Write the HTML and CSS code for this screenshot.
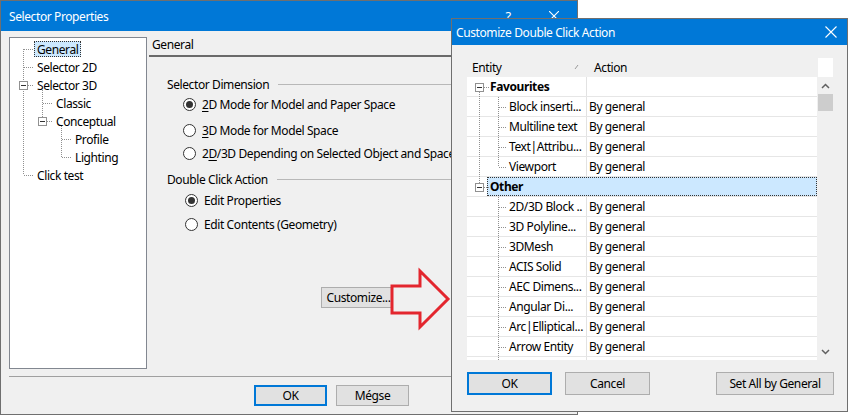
FILE: index.html
```html
<!DOCTYPE html>
<html>
<head>
<meta charset="utf-8">
<link rel="stylesheet" href="styles.css">
</head>
<body>
<div class="win main">
  <div class="titlebar main-title">
    <span class="title">Selector Properties</span>
    <span class="capbtn">?</span>
    <span class="capbtn"><svg width="10" height="10" viewBox="0 0 10 10"><path d="M0 0L10 10M10 0L0 10" stroke="#fff" stroke-width="1.1"/></svg></span>
  </div>
  <div class="main-body">
    <div class="tree">
      <svg class="tree-lines" width="136" height="160" viewBox="0 0 136 160">
        <g stroke="#909090" stroke-width="1" stroke-dasharray="1 1" fill="none">
          <path d="M13.5 11V137"/>
          <path d="M14 11.5H23M14 29.5H23M18 47.5H23M14 137.5H23"/>
          <path d="M32.5 52V79M33 65.5H42M37 83.5H42"/>
          <path d="M51.5 88V119M52 101.5H61M52 119.5H61"/>
        </g>
        <g stroke="#919191" fill="#fff">
          <rect x="9.5" y="43.5" width="8" height="8"/>
          <rect x="28.5" y="79.5" width="8" height="8"/>
        </g>
        <g stroke="#333">
          <path d="M11 47.5H16M30 83.5H35"/>
        </g>
      </svg>
      <div class="node l0"><span class="lbl sel">General</span></div>
      <div class="node l0"><span class="lbl">Selector 2D</span></div>
      <div class="node l0"><span class="lbl">Selector 3D</span></div>
      <div class="node l1"><span class="lbl">Classic</span></div>
      <div class="node l1"><span class="lbl">Conceptual</span></div>
      <div class="node l2"><span class="lbl">Profile</span></div>
      <div class="node l2"><span class="lbl">Lighting</span></div>
      <div class="node l0"><span class="lbl">Click test</span></div>
    </div>
    <div class="page">
      <div class="page-head">General</div>
      <div class="group-label g1"><span>Selector Dimension</span><i class="rule"></i></div>
      <div class="radio r1 checked"><span class="dot"></span><span><u>2</u>D Mode for Model and Paper Space</span></div>
      <div class="radio r2"><span class="dot"></span><span><u>3</u>D Mode for Model Space</span></div>
      <div class="radio r3"><span class="dot"></span><span>2<u>D</u>/3D Depending on Selected Object and Space</span></div>
      <div class="group-label g2"><span>Double Click Action</span><i class="rule"></i></div>
      <div class="radio r4 in2 checked"><span class="dot"></span><span>Edit Properties</span></div>
      <div class="radio r5 in2"><span class="dot"></span><span>Edit Contents (Geometry)</span></div>
      <div class="btn customize">Customize...</div>
    </div>
  </div>
  <div class="main-foot">
    <div class="btn default okm">OK</div>
    <div class="btn cancelm">Mégse</div>
  </div>
</div>

<svg class="arrow" width="66" height="66" viewBox="388 266 66 66">
  <path d="M392 286H420V271L448 299L420 327V313H392Z" fill="#f0f0f0" stroke="#e3262e" stroke-width="3" stroke-linejoin="miter"/>
</svg>

<div class="win dlg">
  <div class="titlebar dlg-title">
    <span class="title">Customize Double Click Action</span>
    <span class="capbtn small"><svg width="12" height="12" viewBox="0 0 12 12"><path d="M0.5 0.5L11.5 11.5M11.5 0.5L0.5 11.5" stroke="#fff" stroke-width="1.1"/></svg></span>
  </div>
  <div class="dlg-body">
    <div class="grid">
      <div class="table">
        <div class="thead">
          <div class="hc c1">Entity<svg class="sort" width="6" height="6" viewBox="0 0 6 6"><path d="M1 5L4 1" stroke="#9a9a9a" stroke-width="1"/></svg></div>
          <div class="hc c2">Action</div>
        </div>
        <div class="tbody">
          <svg class="grid-lines" width="40" height="290" viewBox="0 0 40 290">
            <g stroke="#909090" stroke-width="1" stroke-dasharray="1 1" fill="none">
              <path d="M12.5 15V106"/>
              <path d="M17 10.5H22M17 110.5H22"/>
              <path d="M31.5 20V90M32 30.5H40M32 50.5H40M32 70.5H40M32 90.5H40"/>
              <path d="M31.5 120V290M32 130.5H40M32 150.5H40M32 170.5H40M32 190.5H40M32 210.5H40M32 230.5H40M32 250.5H40M32 270.5H40M32 290.5H40"/>
            </g>
            <g stroke="#919191" fill="#fff">
              <rect x="8.5" y="6.5" width="8" height="8"/>
              <rect x="8.5" y="106.5" width="8" height="8"/>
            </g>
            <g stroke="#333">
              <path d="M10 10.5H15M10 110.5H15"/>
            </g>
          </svg>
          <div class="row grp"><div class="c1 t0"><b>Favourites</b></div><div class="c2"></div></div>
          <div class="row"><div class="c1 t1">Block inserti...</div><div class="c2">By general</div></div>
          <div class="row"><div class="c1 t1">Multiline text</div><div class="c2">By general</div></div>
          <div class="row"><div class="c1 t1">Text|Attribu...</div><div class="c2">By general</div></div>
          <div class="row"><div class="c1 t1">Viewport</div><div class="c2">By general</div></div>
          <div class="row selrow"><div class="pad"></div><div class="selbox"><b>Other</b></div></div>
          <div class="row"><div class="c1 t1">2D/3D Block ..</div><div class="c2">By general</div></div>
          <div class="row"><div class="c1 t1">3D Polyline...</div><div class="c2">By general</div></div>
          <div class="row"><div class="c1 t1">3DMesh</div><div class="c2">By general</div></div>
          <div class="row"><div class="c1 t1">ACIS Solid</div><div class="c2">By general</div></div>
          <div class="row"><div class="c1 t1">AEC Dimens...</div><div class="c2">By general</div></div>
          <div class="row"><div class="c1 t1">Angular Di...</div><div class="c2">By general</div></div>
          <div class="row"><div class="c1 t1">Arc|Elliptical...</div><div class="c2">By general</div></div>
          <div class="row"><div class="c1 t1">Arrow Entity</div><div class="c2">By general</div></div>
          <div class="row"><div class="c1 t1"></div><div class="c2"></div></div>
        </div>
      </div>
      <div class="vscroll">
        <div class="corner"></div>
        <div class="track">
          <svg class="chev" width="9" height="6" viewBox="0 0 9 6"><path d="M1 5L4.5 1.5L8 5" stroke="#606060" stroke-width="1.5" fill="none"/></svg>
          <div class="thumb"></div>
          <div class="spacer"></div>
          <svg class="chev" width="9" height="6" viewBox="0 0 9 6"><path d="M1 1L4.5 4.5L8 1" stroke="#606060" stroke-width="1.5" fill="none"/></svg>
        </div>
      </div>
    </div>
    <div class="dlg-foot">
      <div class="btn default dbtn">OK</div>
      <div class="btn dbtn">Cancel</div>
      <div class="btn setall">Set All by General</div>
    </div>
  </div>
</div>
</body>
</html>
```

FILE: styles.css
```css
* { box-sizing: border-box; }
html, body { margin: 0; padding: 0; }
body {
  width: 848px; height: 416px; overflow: hidden; position: relative;
  background: #fff;
  font-family: "Noto Sans", "DejaVu Sans", sans-serif;
  font-size: 12px; color: #000;
  letter-spacing: -0.4px;
}
u { text-decoration: underline; text-underline-offset: 2px; }

.win {
  position: absolute;
  background: #f0f0f0;
  border: 1px solid #6f6f6f;
  display: flex; flex-direction: column;
}
.main { left: 0; top: 0; width: 578px; height: 415px; }
.dlg { left: 451px; top: 18px; width: 397px; height: 394px; }

.titlebar {
  background: #0078d7; color: #fff;
  display: flex; align-items: center; flex: none;
}
.title { flex: 1; white-space: nowrap; }
.main-title { height: 30px; padding-left: 8px; }
.dlg-title { height: 26px; padding-left: 4px; }
.capbtn {
  width: 46px; height: 100%;
  display: flex; align-items: center; justify-content: center;
  font-size: 13px;
}
.capbtn.small { width: 32px; }

/* main body */
.main-body {
  flex: none; height: 345px;
  display: flex; padding: 6px 0 0 8px;
}
.tree {
  position: relative;
  width: 138px; height: 332px;
  background: #fff;
  border: 1px solid #828790;
  padding-top: 2px;
}
.tree-lines { position: absolute; left: 0; top: 0; }
.node { height: 18px; padding-top: 1px; position: relative; }
.node.l0 { padding-left: 24px; }
.node.l1 { padding-left: 43px; }
.node.l2 { padding-left: 62px; }
.lbl {
  display: inline-block; height: 16px; line-height: 15px;
  padding: 0 2px; border: 1px solid transparent; white-space: nowrap;
}
.lbl.sel { background: #cce8ff; border: 1px dotted #333; }

.page { flex: 1; margin-left: 2px; display: flex; flex-direction: column; }
.page-head {
  height: 20px; line-height: 16px; padding-left: 3px;
  border-bottom: 2px solid #6a6a6a;
}
.group-label {
  display: flex; align-items: center; height: 16px;
  padding-left: 18px; white-space: nowrap;
}
.group-label .rule { flex: 1; height: 1px; background: #b8b8b8; margin-left: 9px; }
.g1 { margin-top: 19px; }
.g2 { margin-top: 8px; }

.radio {
  display: flex; align-items: center; height: 20px;
  padding-left: 34px; white-space: nowrap;
}
.radio.in2 { padding-left: 36px; }
.radio .dot {
  width: 13px; height: 13px; border-radius: 50%;
  border: 1px solid #333; background: #fff; margin-right: 6px;
  display: flex; align-items: center; justify-content: center;
  flex: none;
}
.radio.checked .dot::after {
  content: ""; width: 7px; height: 7px; border-radius: 50%; background: #333;
}
.r1 { margin-top: 2px; }
.r2 { margin-top: 6px; }
.r3 { margin-top: 3px; }
.r4 { margin-top: 3px; }
.r5 { margin-top: 4px; }

.btn {
  display: flex; align-items: center; justify-content: center;
  background: #e1e1e1; border: 1px solid #adadad;
  white-space: nowrap;
}
.btn.default { border: 2px solid #0078d7; }
.customize {
  margin-top: 53px; margin-left: 172px;
  width: 75px; height: 21px;
}

.main-foot {
  flex: 1; display: flex; align-items: flex-start;
  margin: 0 0 0 8px;
  border-top: 1px solid #a0a0a0;
  padding: 8px 0 0 245px; gap: 9px;
}
.okm, .cancelm { width: 73px; height: 21px; }

.arrow { position: absolute; left: 388px; top: 266px; }

/* dialog */
.dlg-body { flex: 1; display: flex; flex-direction: column; padding: 13px 13px 0 15px; }
.grid { display: flex; height: 302px; width: 367px; }
.table { width: 350px; display: flex; flex-direction: column; }
.thead { height: 19px; display: flex; flex: none; }
.hc { display: flex; align-items: center; position: relative; }
.thead .c1 { width: 120px; padding-left: 5px; }
.thead .c2 { padding-left: 7px; }
.sort { position: absolute; left: 107px; top: 6px; }
.tbody { flex: 1; background: #fff; overflow: hidden; position: relative; }
.grid-lines { position: absolute; left: 0; top: 0; }
.row {
  height: 20px; display: flex;
  border-bottom: 1px solid #e6e6e6;
  white-space: nowrap;
}
.row .c1 { width: 120px; border-right: 1px solid #e2e2e2; line-height: 19px; }
.row .c2 { flex: 1; padding-left: 2px; line-height: 19px; }
.row .t0 { padding-left: 23px; }
.row .t1 { padding-left: 42px; }
.row .pad { width: 20px; flex: none; }
.selbox {
  flex: 1; background: #cce8ff; border: 1px dotted #333;
  padding-left: 2px; line-height: 17px;
}

.vscroll { width: 17px; display: flex; flex-direction: column; }
.corner { height: 19px; margin: 0 1px; background: #fff; }
.track {
  flex: 1; background: #f0f0f0;
  display: flex; flex-direction: column; align-items: center;
  padding: 6px 0 5px;
}
.thumb { width: 15px; height: 17px; background: #cdcdcd; margin-top: 5px; }
.spacer { flex: 1; }

.dlg-foot { display: flex; padding-top: 12px; gap: 13px; }
.dbtn { width: 85px; height: 23px; }
.setall { width: 118px; height: 23px; margin-left: auto; }
```
